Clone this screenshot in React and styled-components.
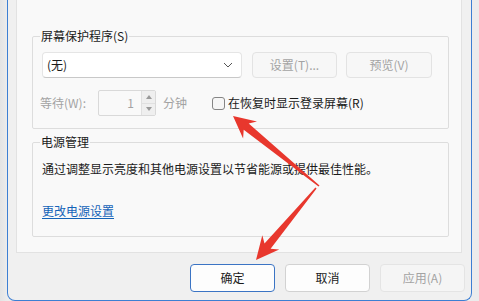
import React from 'react';
import styled, { createGlobalStyle } from 'styled-components';

const GlobalStyle = createGlobalStyle`
  html, body {
    margin: 0;
    padding: 0;
    background: #e9e9e9;
  }
  * {
    box-sizing: border-box;
  }
`;

const Page = styled.div`
  position: relative;
  width: 479px;
  height: 301px;
  overflow: hidden;
  padding-left: 7px;
  background: linear-gradient(90deg, #e4e4e4 0, #ececec 7px, #ececec 100%);
  font-family: 'Noto Sans CJK SC', 'Noto Sans', sans-serif;
  font-size: 12px;
  line-height: 16px;
  color: #1b1b1b;
`;

const Window = styled.div`
  display: flex;
  flex-direction: column;
  width: 465px;
  height: 301px;
  background: #f0f0f0;
  border: 1px solid #3d7fd3;
  border-top: none;
  border-radius: 0 0 8px 8px;
`;

const Panel = styled.div`
  margin: 0 9px 0 8px;
  padding: 28px 12px 15px 15px;
  background: #f9f9f9;
  border: 1px solid #e2e2e2;
  border-top: none;
`;

const Group = styled.fieldset`
  margin: ${p => (p.$first ? '0' : '5px 0 0 0')};
  padding: ${p => p.$pad};
  min-width: 0;
  border: 1px solid #dddddd;
  border-radius: 2px;
`;

const Legend = styled.legend`
  margin-left: -2px;
  padding: 0 1px;
  height: 16px;
  line-height: 16px;
  color: #1b1b1b;
`;

const Row = styled.div`
  display: flex;
  align-items: center;
  height: 26px;
  margin-top: ${p => p.$gap || 0}px;
`;

const Select = styled.div`
  display: flex;
  align-items: center;
  justify-content: space-between;
  width: 200px;
  height: 26px;
  padding: 0 8px 0 4px;
  background: #ffffff;
  border: 1px solid #e5e5e5;
  border-bottom-color: #c8c8c8;
  border-radius: 4px;
`;

const SmallButton = styled.div`
  display: flex;
  align-items: center;
  justify-content: center;
  width: ${p => p.$w}px;
  height: 26px;
  margin-left: ${p => p.$ml}px;
  background: #f7f7f7;
  border: 1px solid #e3e3e3;
  border-radius: 4px;
  color: #a3a3a3;
`;

const DimLabel = styled.span`
  margin-left: -2px;
  width: 58px;
  color: #a3a3a3;
`;

const Spin = styled.div`
  display: flex;
  width: 58px;
  height: 26px;
  background: #f9f9f9;
  border: 1px solid #d9d9d9;
  border-radius: 2px;
`;

const SpinValue = styled.span`
  flex: 1;
  padding-right: 7px;
  text-align: right;
  line-height: 24px;
  color: #a3a3a3;
`;

const SpinArrows = styled.div`
  display: flex;
  flex-direction: column;
  width: 14px;
  border-left: 1px solid #e0e0e0;
  background: #efefef;
`;

const SpinHalf = styled.div`
  flex: 1;
  display: flex;
  align-items: center;
  justify-content: center;
  & + & {
    border-top: 1px solid #e0e0e0;
  }
`;

const Unit = styled.span`
  margin-left: 7px;
  color: #a3a3a3;
`;

const CheckLabel = styled.label`
  display: flex;
  align-items: center;
  margin-left: 25px;
  color: #1b1b1b;
`;

const Box = styled.span`
  width: 13px;
  height: 13px;
  margin-right: 3px;
  background: #f6f6f6;
  border: 1px solid #858585;
  border-radius: 3px;
`;

const Line = styled.div`
  margin-top: ${p => p.$gap || 0}px;
  height: 16px;
`;

const Link = styled.a`
  color: #1463b8;
  text-decoration: underline;
  text-underline-offset: 2px;
`;

const ButtonRow = styled.div`
  display: flex;
  justify-content: flex-end;
  gap: 10px;
  margin-top: 11px;
  padding-right: 6px;
`;

const DialogButton = styled.div`
  display: flex;
  align-items: center;
  justify-content: center;
  width: 85px;
  height: 28px;
  border-radius: 4px;
  background: ${p => (p.$disabled ? '#f5f5f5' : '#fdfdfd')};
  border: 1px solid ${p => (p.$primary ? '#3b74c4' : p.$disabled ? '#e4e4e4' : '#d2d2d2')};
  color: ${p => (p.$disabled ? '#a3a3a3' : '#1b1b1b')};
`;

const Overlay = styled.svg`
  position: absolute;
  left: 0;
  top: 0;
  pointer-events: none;
`;

const arrowPoints = (tail, tip, head, half, neck, tailW) => {
  const dx = tip[0] - tail[0];
  const dy = tip[1] - tail[1];
  const len = Math.hypot(dx, dy);
  const ux = dx / len;
  const uy = dy / len;
  const nx = -uy;
  const ny = ux;
  const bx = tip[0] - ux * head;
  const by = tip[1] - uy * head;
  const kx = tip[0] - ux * (head - 5);
  const ky = tip[1] - uy * (head - 5);
  const pts = [
    tip,
    [bx + nx * half, by + ny * half],
    [kx + nx * neck, ky + ny * neck],
    [tail[0] + nx * tailW, tail[1] + ny * tailW],
    [tail[0] - nx * tailW, tail[1] - ny * tailW],
    [kx - nx * neck, ky - ny * neck],
    [bx - nx * half, by - ny * half],
  ];
  return pts.map(p => `${p[0].toFixed(1)},${p[1].toFixed(1)}`).join(' ');
};

const Arrows = () => (
  <Overlay width="479" height="301" viewBox="0 0 479 301">
    <polygon points={arrowPoints([319, 186], [233, 116], 22, 11, 4, 0.8)} fill="#e8372d" />
    <polygon points={arrowPoints([316, 188], [256, 260], 23, 11, 4, 0.8)} fill="#e8372d" />
  </Overlay>
);

export default function App() {
  return (
    <>
      <GlobalStyle />
      <Page>
        <Window>
          <Panel>
            <Group $first $pad="8px 9px 12px 9px">
              <Legend>屏幕保护程序(S)</Legend>
              <Row>
                <Select>
                  <span>(无)</span>
                  <svg width="10" height="6" viewBox="0 0 10 6">
                    <path d="M1 1 L5 5 L9 1" fill="none" stroke="#555" strokeWidth="1" />
                  </svg>
                </Select>
                <SmallButton $w={85} $ml={10}>设置(T)...</SmallButton>
                <SmallButton $w={86} $ml={9}>预览(V)</SmallButton>
              </Row>
              <Row $gap={12}>
                <DimLabel>等待(W):</DimLabel>
                <Spin>
                  <SpinValue>1</SpinValue>
                  <SpinArrows>
                    <SpinHalf>
                      <svg width="6" height="4" viewBox="0 0 6 4">
                        <path d="M0 4 L3 0 L6 4 Z" fill="#9a9a9a" />
                      </svg>
                    </SpinHalf>
                    <SpinHalf>
                      <svg width="6" height="4" viewBox="0 0 6 4">
                        <path d="M0 0 L3 4 L6 0 Z" fill="#9a9a9a" />
                      </svg>
                    </SpinHalf>
                  </SpinArrows>
                </Spin>
                <Unit>分钟</Unit>
                <CheckLabel>
                  <Box />
                  在恢复时显示登录屏幕(R)
                </CheckLabel>
              </Row>
            </Group>
            <Group $pad="11px 9px 17px 9px">
              <Legend>电源管理</Legend>
              <Line>通过调整显示亮度和其他电源设置以节省能源或提供最佳性能。</Line>
              <Line $gap={26}>
                <Link>更改电源设置</Link>
              </Line>
            </Group>
          </Panel>
          <ButtonRow>
            <DialogButton $primary>确定</DialogButton>
            <DialogButton>取消</DialogButton>
            <DialogButton $disabled>应用(A)</DialogButton>
          </ButtonRow>
        </Window>
        <Arrows />
      </Page>
    </>
  );
}
